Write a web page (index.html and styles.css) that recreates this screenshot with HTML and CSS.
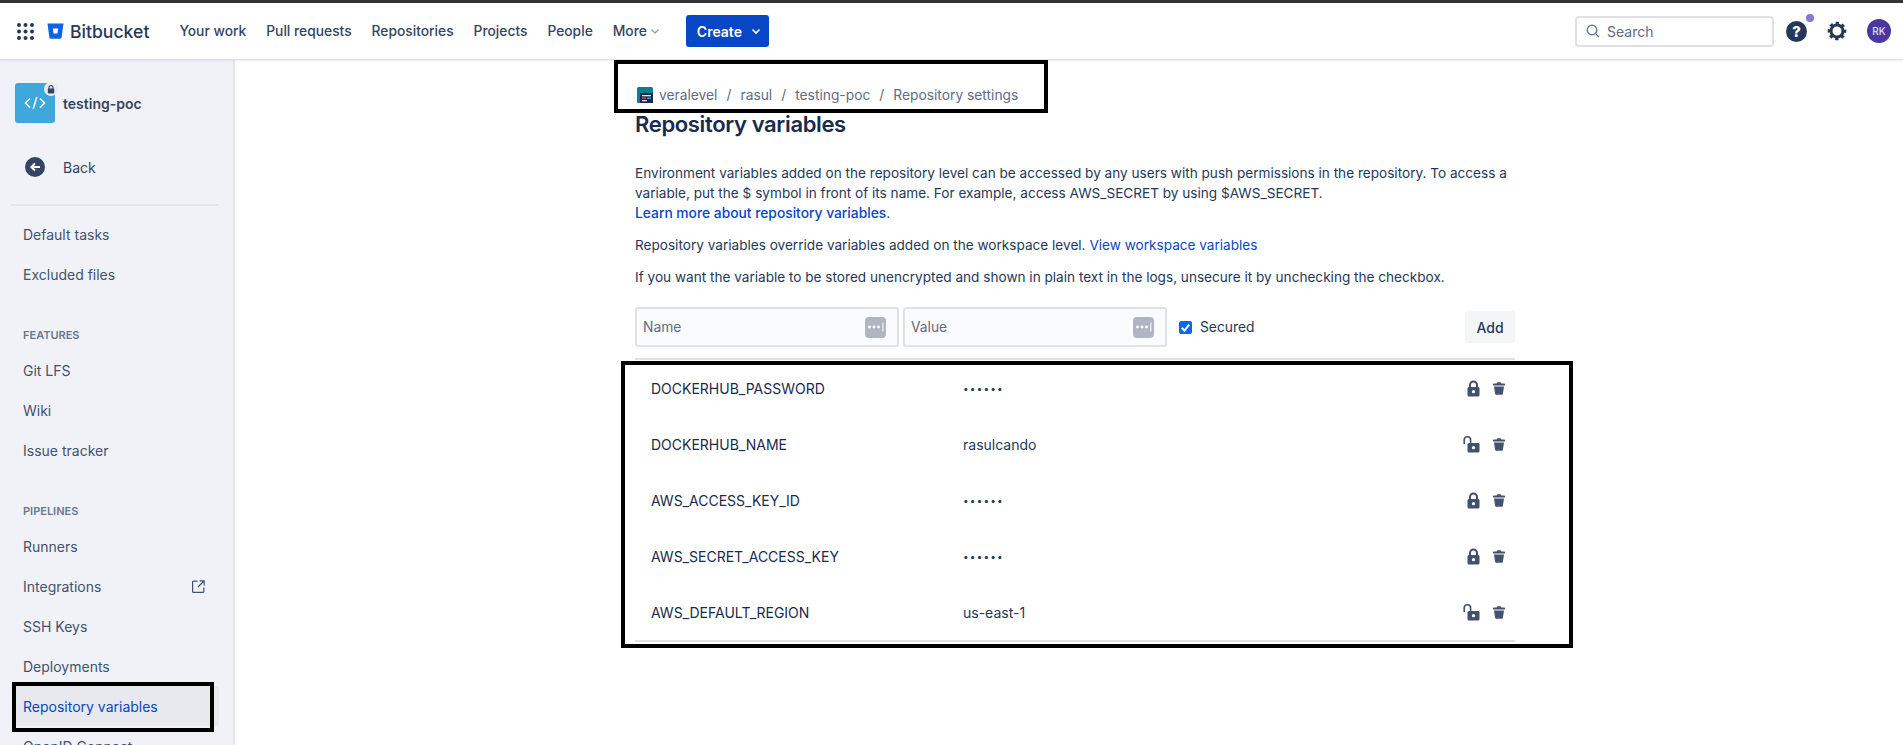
FILE: index.html
```html
<!DOCTYPE html>
<html lang="en">
<head>
    <meta charset="UTF-8">
    <title>Repository variables</title>
    <link rel="stylesheet" href="styles.css">
</head>
<body>
<div class="page">
    <header class="topbar">
        <svg class="apps" width="17" height="17" viewBox="0 0 17 17" fill="#253858">
            <circle cx="2" cy="2" r="2"/><circle cx="8.5" cy="2" r="2"/><circle cx="15" cy="2" r="2"/>
            <circle cx="2" cy="8.5" r="2"/><circle cx="8.5" cy="8.5" r="2"/><circle cx="15" cy="8.5" r="2"/>
            <circle cx="2" cy="15" r="2"/><circle cx="8.5" cy="15" r="2"/><circle cx="15" cy="15" r="2"/>
        </svg>
        <a class="brand">
            <svg width="17" height="16" viewBox="0 0 17 16">
                <path d="M0.5 0.5H16.5L14.6 14.6C14.5 15.3 14 15.7 13.4 15.7H3.6C3 15.7 2.5 15.3 2.4 14.6Z" fill="#0c66e4"/>
                <path d="M5.8 5.5H11.2L10.4 10.6H6.6Z" fill="#fff"/>
            </svg>
            <span>Bitbucket</span>
        </a>
        <nav class="mainnav">
            <a>Your work</a>
            <a>Pull requests</a>
            <a>Repositories</a>
            <a>Projects</a>
            <a>People</a>
            <a class="more">More
                <svg width="10" height="10" viewBox="0 0 10 10" fill="none" stroke="#97a0af" stroke-width="1.3"><path d="M1.5 3.5L5 7L8.5 3.5"/></svg>
            </a>
        </nav>
        <button class="create">Create
            <svg width="10" height="10" viewBox="0 0 10 10" fill="none" stroke="#fff" stroke-width="1.6"><path d="M1.5 3.5L5 7L8.5 3.5"/></svg>
        </button>
        <div class="topright">
            <div class="search">
                <svg width="14" height="14" viewBox="0 0 14 14" fill="none" stroke="#5e6c84" stroke-width="1.3"><circle cx="6" cy="6" r="4.8"/><path d="M9.6 9.6L13 13"/></svg>
                <span>Search</span>
            </div>
            <div class="help">?<i class="help-dot"></i></div>
            <svg class="gear" width="20" height="20" viewBox="0 0 20 20" fill="none" stroke="#253858">
                <circle cx="10" cy="10" r="6" stroke-width="3"/>
                <circle cx="10" cy="10" r="8" stroke-width="2.6" stroke-dasharray="3.3 2.98" stroke-dashoffset="1.6"/>
            </svg>
            <div class="avatar">RK</div>
        </div>
    </header>

    <div class="layout">
        <aside class="sidebar">
            <div class="repo">
                <div class="repo-icon">
                    <svg width="22" height="14" viewBox="0 0 22 14" fill="none" stroke="#fff" stroke-width="1.5"><path d="M6 2.5L1.5 7L6 11.5M16 2.5L20.5 7L16 11.5M12.8 1L9.2 13"/></svg>
                    <span class="repo-lock">
                        <svg width="8" height="9" viewBox="0 0 8 9"><path d="M2 4V2.6a2 2 0 014 0V4" fill="none" stroke="#344563" stroke-width="1.2"/><rect x="0.8" y="3.6" width="6.4" height="5" rx="1" fill="#344563"/></svg>
                    </span>
                </div>
                <span class="repo-name">testing-poc</span>
            </div>
            <a class="back">
                <svg width="20" height="20" viewBox="0 0 20 20"><circle cx="10" cy="10" r="10" fill="#344563"/><path d="M15 10H7M10 6.6L6.4 10L10 13.4" fill="none" stroke="#fff" stroke-width="2"/></svg>
                <span>Back</span>
            </a>
            <hr class="side-divider">
            <a class="side-item">Default tasks</a>
            <a class="side-item">Excluded files</a>
            <h4 class="side-head">FEATURES</h4>
            <a class="side-item">Git LFS</a>
            <a class="side-item">Wiki</a>
            <a class="side-item">Issue tracker</a>
            <h4 class="side-head">PIPELINES</h4>
            <a class="side-item">Runners</a>
            <a class="side-item">Integrations
                <svg width="13" height="13" viewBox="0 0 13 13" fill="none" stroke="#42526e" stroke-width="1.2"><path d="M5.5 1.2H1.6a1 1 0 00-1 1v9.2a1 1 0 001 1h9.2a1 1 0 001-1V7.5M7.6 0.8h4.6v4.6M12 1L6 7"/></svg>
            </a>
            <a class="side-item">SSH Keys</a>
            <a class="side-item">Deployments</a>
            <a class="side-item active">Repository variables</a>
            <a class="side-item">OpenID Connect</a>
        </aside>

        <main class="content">
            <div class="crumbs">
                <svg width="16" height="16" viewBox="0 0 16 16">
                    <rect width="16" height="16" rx="1.5" fill="#0b7f8f"/>
                    <rect x="3" y="6" width="13" height="10" fill="#172b4d"/>
                    <rect x="5" y="8" width="9" height="1.3" fill="#dfe1e6"/>
                    <rect x="5" y="10.5" width="4" height="1.3" fill="#e5484d"/>
                    <rect x="10" y="10.5" width="4" height="1.3" fill="#4c9aff"/>
                    <rect x="5" y="13" width="5" height="1.3" fill="#dfe1e6"/>
                </svg>
                <a>veralevel</a><span>/</span><a>rasul</a><span>/</span><a>testing-poc</a><span>/</span><a>Repository settings</a>
            </div>
            <h1 class="title">Repository variables</h1>
            <p class="desc">Environment variables added on the repository level can be accessed by any users with push permissions in the repository. To access a variable, put the $ symbol in front of its name. For example, access AWS_SECRET by using $AWS_SECRET.<br><a class="link-strong">Learn more about repository variables</a>.</p>
            <p class="desc">Repository variables override variables added on the workspace level. <a class="link">View workspace variables</a></p>
            <p class="desc">If you want the variable to be stored unencrypted and shown in plain text in the logs, unsecure it by unchecking the checkbox.</p>

            <form class="var-form">
                <div class="field"><span>Name</span><i class="field-key"><svg width="18" height="10" viewBox="0 0 18 10" fill="#fff"><circle cx="2.5" cy="5" r="1.4"/><circle cx="7" cy="5" r="1.4"/><circle cx="11.5" cy="5" r="1.4"/><rect x="15.4" y="0.5" width="1" height="9"/></svg></i></div>
                <div class="field"><span>Value</span><i class="field-key"><svg width="18" height="10" viewBox="0 0 18 10" fill="#fff"><circle cx="2.5" cy="5" r="1.4"/><circle cx="7" cy="5" r="1.4"/><circle cx="11.5" cy="5" r="1.4"/><rect x="15.4" y="0.5" width="1" height="9"/></svg></i></div>
                <label class="secured">
                    <svg width="13" height="13" viewBox="0 0 13 13"><rect width="13" height="13" rx="2" fill="#0b66f0"/><path d="M2.8 6.8L5.4 9.6L10.2 3.6" fill="none" stroke="#fff" stroke-width="2"/></svg>
                    Secured
                </label>
                <button class="add" type="button">Add</button>
            </form>

            <div class="vars">
                <div class="var-row">
                    <span class="var-name">DOCKERHUB_PASSWORD</span>
                    <span class="var-value dots">••••••</span>
                    <span class="var-actions">
                        <svg class="ic-lock" width="17" height="17" viewBox="0 0 17 17"><path d="M5 8V5a3.5 3.5 0 017 0v3" fill="none" stroke="#42526e" stroke-width="2"/><rect x="2.5" y="7" width="12" height="9.5" rx="1.5" fill="#42526e"/><circle cx="8.5" cy="11.7" r="1.6" fill="#fff"/></svg>
                        <svg class="ic-trash" width="12" height="13" viewBox="0 0 12 13" fill="#42526e"><path d="M0 2.2C0 1.6 .4 1.4 1 1.4H3.8L4.4 .2H7.6L8.2 1.4H11C11.6 1.4 12 1.6 12 2.2V3.4H0Z"/><path d="M1 4.4H11L9.9 11.8C9.8 12.5 9.4 12.8 8.8 12.8H3.2C2.6 12.8 2.2 12.5 2.1 11.8Z"/></svg>
                    </span>
                </div>
                <div class="var-row">
                    <span class="var-name">DOCKERHUB_NAME</span>
                    <span class="var-value">rasulcando</span>
                    <span class="var-actions">
                        <svg class="ic-lock" width="17" height="17" viewBox="2 0 17 17"><path d="M1.2 8V4a3.2 3.2 0 016.4 0v3.5" fill="none" stroke="#42526e" stroke-width="1.6"/><rect x="4.5" y="7" width="12" height="9.5" rx="1.5" fill="#42526e"/><circle cx="10.5" cy="11.7" r="1.6" fill="#fff"/></svg>
                        <svg class="ic-trash" width="12" height="13" viewBox="0 0 12 13" fill="#42526e"><path d="M0 2.2C0 1.6 .4 1.4 1 1.4H3.8L4.4 .2H7.6L8.2 1.4H11C11.6 1.4 12 1.6 12 2.2V3.4H0Z"/><path d="M1 4.4H11L9.9 11.8C9.8 12.5 9.4 12.8 8.8 12.8H3.2C2.6 12.8 2.2 12.5 2.1 11.8Z"/></svg>
                    </span>
                </div>
                <div class="var-row">
                    <span class="var-name">AWS_ACCESS_KEY_ID</span>
                    <span class="var-value dots">••••••</span>
                    <span class="var-actions">
                        <svg class="ic-lock" width="17" height="17" viewBox="0 0 17 17"><path d="M5 8V5a3.5 3.5 0 017 0v3" fill="none" stroke="#42526e" stroke-width="2"/><rect x="2.5" y="7" width="12" height="9.5" rx="1.5" fill="#42526e"/><circle cx="8.5" cy="11.7" r="1.6" fill="#fff"/></svg>
                        <svg class="ic-trash" width="12" height="13" viewBox="0 0 12 13" fill="#42526e"><path d="M0 2.2C0 1.6 .4 1.4 1 1.4H3.8L4.4 .2H7.6L8.2 1.4H11C11.6 1.4 12 1.6 12 2.2V3.4H0Z"/><path d="M1 4.4H11L9.9 11.8C9.8 12.5 9.4 12.8 8.8 12.8H3.2C2.6 12.8 2.2 12.5 2.1 11.8Z"/></svg>
                    </span>
                </div>
                <div class="var-row">
                    <span class="var-name">AWS_SECRET_ACCESS_KEY</span>
                    <span class="var-value dots">••••••</span>
                    <span class="var-actions">
                        <svg class="ic-lock" width="17" height="17" viewBox="0 0 17 17"><path d="M5 8V5a3.5 3.5 0 017 0v3" fill="none" stroke="#42526e" stroke-width="2"/><rect x="2.5" y="7" width="12" height="9.5" rx="1.5" fill="#42526e"/><circle cx="8.5" cy="11.7" r="1.6" fill="#fff"/></svg>
                        <svg class="ic-trash" width="12" height="13" viewBox="0 0 12 13" fill="#42526e"><path d="M0 2.2C0 1.6 .4 1.4 1 1.4H3.8L4.4 .2H7.6L8.2 1.4H11C11.6 1.4 12 1.6 12 2.2V3.4H0Z"/><path d="M1 4.4H11L9.9 11.8C9.8 12.5 9.4 12.8 8.8 12.8H3.2C2.6 12.8 2.2 12.5 2.1 11.8Z"/></svg>
                    </span>
                </div>
                <div class="var-row">
                    <span class="var-name">AWS_DEFAULT_REGION</span>
                    <span class="var-value">us-east-1</span>
                    <span class="var-actions">
                        <svg class="ic-lock" width="17" height="17" viewBox="2 0 17 17"><path d="M1.2 8V4a3.2 3.2 0 016.4 0v3.5" fill="none" stroke="#42526e" stroke-width="1.6"/><rect x="4.5" y="7" width="12" height="9.5" rx="1.5" fill="#42526e"/><circle cx="10.5" cy="11.7" r="1.6" fill="#fff"/></svg>
                        <svg class="ic-trash" width="12" height="13" viewBox="0 0 12 13" fill="#42526e"><path d="M0 2.2C0 1.6 .4 1.4 1 1.4H3.8L4.4 .2H7.6L8.2 1.4H11C11.6 1.4 12 1.6 12 2.2V3.4H0Z"/><path d="M1 4.4H11L9.9 11.8C9.8 12.5 9.4 12.8 8.8 12.8H3.2C2.6 12.8 2.2 12.5 2.1 11.8Z"/></svg>
                    </span>
                </div>
            </div>
        </main>
    </div>

    <!-- black boxes somebody drew over the screenshot -->
    <div class="mark mark-crumbs"></div>
    <div class="mark mark-rows"></div>
    <div class="mark mark-side"></div>
</div>
</body>
</html>
```

FILE: styles.css
```css
* {
    box-sizing: border-box;
}
body {
    margin: 0;
    font-family: Inter, "Liberation Sans", sans-serif;
    font-size: 14px;
    color: #172b4d;
    background-color: #fff;
}
.page {
    position: relative;
    height: 745px;
    overflow: hidden;
}
a {
    text-decoration: none;
}

/* top bar */
.topbar {
    display: flex;
    align-items: center;
    height: 60px;
    padding: 0 12px 0 17px;
    border-top: 3px solid #333;
    border-bottom: 1px solid #dfe1e6;
    box-shadow: 0 1px 2px rgba(9, 30, 66, 0.08);
    background-color: #fff;
    position: relative;
}
.brand {
    display: flex;
    align-items: center;
    gap: 6px;
    margin-left: 13px;
    font-size: 17.6px;
    font-weight: 500;
    color: #253858;
}
.mainnav {
    display: flex;
    gap: 20px;
    margin-left: 30px;
    font-size: 13.8px;
    font-weight: 500;
    color: #344563;
}
.more {
    display: flex;
    align-items: center;
    gap: 3px;
}
.create {
    display: flex;
    align-items: center;
    gap: 9px;
    height: 32px;
    width: 83px;
    margin-left: 26px;
    padding: 0 0 0 11px;
    border: none;
    border-radius: 3px;
    background-color: #0747c6;
    color: #fff;
    font-family: inherit;
    font-size: 14px;
    font-weight: 600;
}
.topright {
    display: flex;
    align-items: center;
    margin-left: auto;
}
.search {
    display: flex;
    align-items: center;
    gap: 7px;
    width: 199px;
    height: 31px;
    padding-left: 9px;
    border: 2px solid #dfe1e6;
    border-radius: 4px;
    color: #5e6c84;
}
.help {
    position: relative;
    width: 21px;
    height: 21px;
    margin-left: 12px;
    border-radius: 50%;
    background-color: #253858;
    color: #fff;
    font-size: 15px;
    font-weight: 800;
    line-height: 21px;
    text-align: center;
}
.help-dot {
    position: absolute;
    top: -7px;
    right: -7px;
    width: 8px;
    height: 8px;
    border-radius: 50%;
    background-color: #8777d9;
}
.gear {
    margin-left: 20px;
}
.avatar {
    width: 24px;
    height: 24px;
    margin-left: 20px;
    border-radius: 50%;
    background-color: #4c379f;
    color: #dfe1e6;
    font-size: 10px;
    font-weight: 500;
    line-height: 24px;
    text-align: center;
}

/* layout */
.layout {
    display: flex;
    height: 685px;
}

/* sidebar */
.sidebar {
    flex: 0 0 235px;
    padding-top: 23px;
    background-color: #f1f2f7;
    border-right: 2px solid #e4e6ea;
    color: #42526e;
}
.repo {
    display: flex;
    align-items: center;
    gap: 8px;
    margin-left: 15px;
}
.repo-icon {
    position: relative;
    display: flex;
    align-items: center;
    justify-content: center;
    width: 40px;
    height: 40px;
    border-radius: 3px;
    background-color: #3ea7dc;
}
.repo-lock {
    position: absolute;
    top: -1px;
    right: -3px;
    display: flex;
    align-items: center;
    justify-content: center;
    width: 14px;
    height: 14px;
    border-radius: 50%;
    background-color: #ebecf0;
}
.repo-name {
    font-weight: 600;
    color: #344563;
}
.back {
    display: flex;
    align-items: center;
    gap: 18px;
    margin: 34px 0 0 25px;
    color: #344563;
}
.side-divider {
    height: 2px;
    margin: 27px 0 8px 11px;
    border: none;
    background-color: #e2e4e9;
    width: 208px;
}
.side-item {
    display: flex;
    align-items: center;
    justify-content: space-between;
    height: 40px;
    margin: 0 14px 0 15px;
    padding: 0 14px 0 8px;
    border-radius: 3px;
}
.side-head {
    margin: 34px 0 8px 23px;
    font-size: 11px;
    font-weight: 600;
    line-height: 14px;
    color: #6b778c;
}
.side-item.active {
    background-color: #e8e9ee;
    color: #0747c6;
}

/* main content */
.content {
    width: 880px;
    margin-left: 400px;
}
.crumbs {
    display: flex;
    align-items: center;
    gap: 9px;
    height: 16px;
    margin: 27px 0 0 2px;
    font-size: 13.8px;
    color: #5e6c84;
}
.crumbs svg {
    margin-right: -3px;
}
.title {
    margin: 7px 0 0;
    font-size: 22px;
    font-weight: 600;
    letter-spacing: -0.35px;
    line-height: 28px;
    color: #172b4d;
}
.desc {
    margin: 0 0 12px;
    font-size: 13.6px;
    line-height: 20px;
    color: #253858;
}
.title + .desc {
    margin-top: 25px;
}
.link {
    color: #0747c6;
}
.link-strong {
    color: #0747c6;
    font-size: 13.8px;
    font-weight: 500;
}
.var-form {
    display: flex;
    align-items: center;
    height: 40px;
    margin-top: 20px;
}
.field {
    display: flex;
    align-items: center;
    justify-content: space-between;
    width: 264px;
    height: 40px;
    padding: 0 11px 0 6px;
    border: 2px solid #dfe1e6;
    border-radius: 3px;
    background-color: #fafbfc;
    font-size: 13.8px;
    color: #5e6c84;
}
.field + .field {
    margin-left: 4px;
}
.field-key {
    display: flex;
    align-items: center;
    justify-content: center;
    width: 21px;
    height: 21px;
    border-radius: 4px;
    background-color: #b0b5c1;
}
.secured {
    display: flex;
    align-items: center;
    gap: 8px;
    margin-left: 12px;
    font-size: 13.8px;
    color: #253858;
}
.add {
    width: 50px;
    height: 32px;
    margin-left: auto;
    border: none;
    border-radius: 3px;
    background-color: #f4f5f7;
    color: #253858;
    font-family: inherit;
    font-size: 14px;
    font-weight: 500;
}
.vars {
    margin-top: 11px;
    border-top: 2px solid #dfe1e6;
    border-bottom: 2px solid #dfe1e6;
}
.var-row {
    display: flex;
    align-items: center;
    height: 56px;
}
.var-name {
    width: 328px;
    padding-left: 16px;
    color: #172b4d;
}
.var-value {
    color: #253858;
}
.dots {
    font-size: 10px;
    letter-spacing: 1.2px;
}
.var-actions {
    display: flex;
    align-items: center;
    gap: 11px;
    margin-left: auto;
    margin-right: 10px;
}
.ic-lock {
    overflow: visible;
}

/* annotation boxes */
.mark {
    position: absolute;
    border: 4px solid #000;
}
.mark-crumbs {
    left: 614px;
    top: 60px;
    width: 434px;
    height: 53px;
}
.mark-rows {
    left: 621px;
    top: 361px;
    width: 952px;
    height: 287px;
}
.mark-side {
    left: 12px;
    top: 682px;
    width: 202px;
    height: 50px;
}
```
